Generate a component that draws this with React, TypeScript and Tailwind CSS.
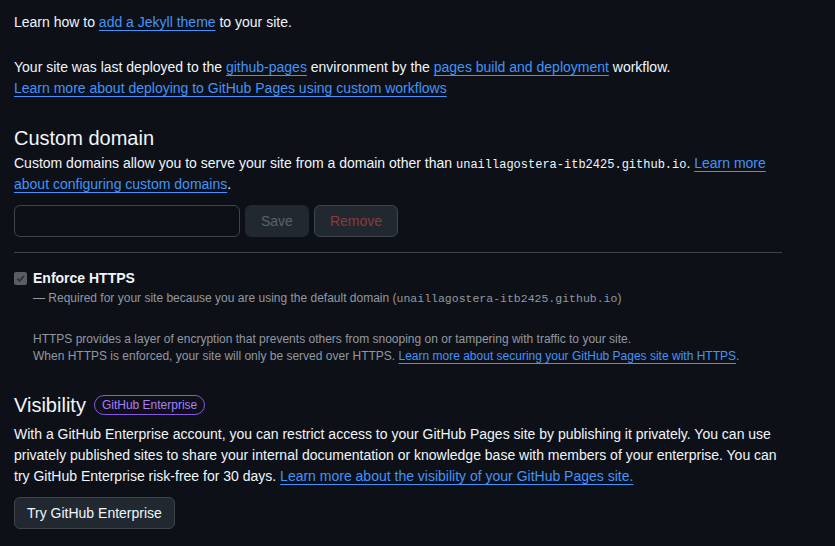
const link = 'text-[#4493f8] underline underline-offset-[3px] decoration-1';

function Mono({ children, size = 'text-[12px]' }: { children: React.ReactNode; size?: string }) {
  return (
    <span className={`${size} leading-none`} style={{ fontFamily: '"Liberation Mono", monospace' }}>
      {children}
    </span>
  );
}

export default function App() {
  return (
    <div
      className="min-h-[546px] bg-[#0d1117] text-[#f0f6fc] text-[14px] leading-[21px] px-[14px] pt-[12px]"
      style={{ fontFamily: '"Liberation Sans", Arial, sans-serif' }}
    >
      <div className="w-[768px]">
        {/* Theme + deploy info */}
        <p>
          Learn how to <a href="#" className={link}>add a Jekyll theme</a> to your site.
        </p>
        <p className="mt-[24px]">
          Your site was last deployed to the <a href="#" className={link}>github-pages</a> environment by the{' '}
          <a href="#" className={link}>pages build and deployment</a> workflow.
          <br />
          <a href="#" className={link}>Learn more about deploying to GitHub Pages using custom workflows</a>
        </p>

        {/* Custom domain */}
        <h2 className="mt-[25px] text-[20px] leading-[29px] font-normal">Custom domain</h2>
        <p>
          Custom domains allow you to serve your site from a domain other than{' '}
          <Mono>unaillagostera-itb2425.github.io</Mono>.{' '}
          <a href="#" className={link}>Learn more about configuring custom domains</a>.
        </p>
        <div className="mt-[10px] flex gap-[5px]">
          <input
            type="text"
            className="w-[226px] h-[32px] rounded-[6px] border border-[#3d444d] bg-[#0d1117] px-3 outline-none"
          />
          <button
            disabled
            className="h-[32px] px-[15px] rounded-[6px] border border-[#212830] bg-[#212830] text-[#5b626b]"
          >
            Save
          </button>
          <button
            disabled
            className="h-[32px] px-[15px] rounded-[6px] border border-[#3d444d] bg-[#212830] text-[#8e3837]"
          >
            Remove
          </button>
        </div>

        <div className="mt-[15px] border-t border-[#3d444d]" />

        {/* Enforce HTTPS */}
        <div className="mt-[15px] flex gap-[6px]">
          <span className="mt-[4px] w-[13px] h-[13px] rounded-[2px] bg-[#5a5d62] flex items-center justify-center shrink-0">
            <svg width="9" height="9" viewBox="0 0 10 10" fill="none">
              <path d="M1.5 5.2 L4 7.6 L8.6 2.4" stroke="#2c2f33" strokeWidth="1.8" />
            </svg>
          </span>
          <div>
            <div className="font-bold">Enforce HTTPS</div>
            <p className="text-[12px] leading-[18px] text-[#9198a1]">
              — Required for your site because you are using the default domain (
              <Mono size="text-[11.5px]">unaillagostera-itb2425.github.io</Mono>)
            </p>
            <p className="mt-[24px] text-[12px] leading-[17px] text-[#9198a1]">
              HTTPS provides a layer of encryption that prevents others from snooping on or tampering with traffic to your site.
              <br />
              When HTTPS is enforced, your site will only be served over HTTPS.{' '}
              <a href="#" className={link}>Learn more about securing your GitHub Pages site with HTTPS</a>.
            </p>
          </div>
        </div>

        {/* Visibility */}
        <div className="mt-[25px] flex items-center gap-[8px]">
          <h2 className="text-[20px] leading-[30px] font-normal">Visibility</h2>
          <span className="rounded-full border border-[#8957e5] px-[7px] text-[12px] leading-[18px] text-[#ab7df8]">
            GitHub Enterprise
          </span>
        </div>
        <p className="mt-[4px]">
          With a GitHub Enterprise account, you can restrict access to your GitHub Pages site by publishing it privately. You can use
          privately published sites to share your internal documentation or knowledge base with members of your enterprise. You can
          try GitHub Enterprise risk-free for 30 days.{' '}
          <a href="#" className={link}>Learn more about the visibility of your GitHub Pages site.</a>
        </p>
        <button className="mt-[10px] h-[32px] px-3 rounded-[6px] border border-[#3d444d] bg-[#212830] text-[#f0f6fc]">
          Try GitHub Enterprise
        </button>
      </div>
    </div>
  );
}
